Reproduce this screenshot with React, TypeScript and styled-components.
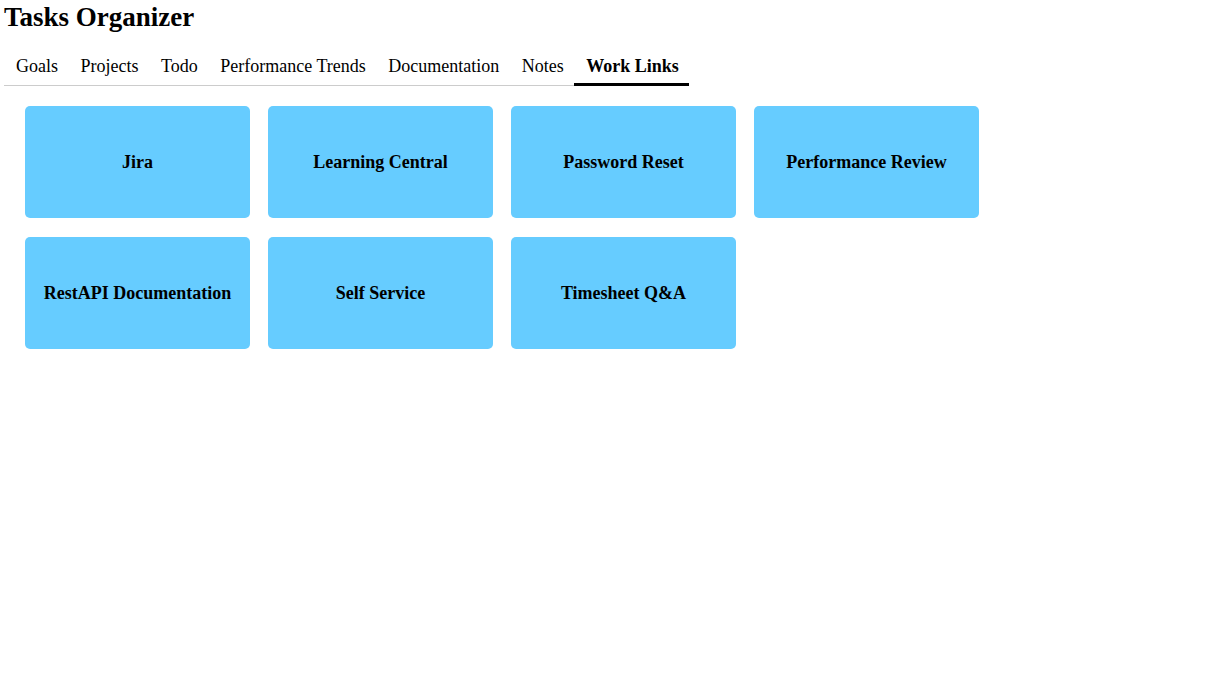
import React from "react";
import styled, { createGlobalStyle } from "styled-components";

const GlobalStyle = createGlobalStyle`
  html, body {
    margin: 0;
    padding: 0;
    background: #ffffff;
    font-family: "Liberation Serif", "Times New Roman", serif;
    color: #000000;
  }
`;

const Page = styled.div`
  padding: 2px 4px 4px;
`;

const Title = styled.h2`
  margin: 0 0 17px;
  font-size: 27px;
  font-weight: bold;
  line-height: normal;
`;

const TabBar = styled.nav`
  display: inline-flex;
  border-bottom: 1px solid #cccccc;
`;

const Tab = styled.button<{ $active?: boolean }>`
  font-family: "Liberation Serif", "Times New Roman", serif;
  font-size: 18px;
  line-height: normal;
  font-weight: ${(p) => (p.$active ? "bold" : "normal")};
  color: #000000;
  background: none;
  border: none;
  border-bottom: 3px solid ${(p) => (p.$active ? "#000000" : "transparent")};
  margin-bottom: -1px;
  padding: 6px 10.5px 6px 12px;
  cursor: pointer;
`;

const CardGrid = styled.div`
  display: flex;
  flex-wrap: wrap;
  gap: 19px 18px;
  padding: 20px 0 0 21px;
  width: 972px;
`;

const LinkCard = styled.a`
  display: flex;
  align-items: center;
  justify-content: center;
  width: 225px;
  height: 112px;
  background: #66ccff;
  border-radius: 5px;
  font-size: 18px;
  font-weight: bold;
  color: #000000;
  text-decoration: none;
  text-align: center;
`;

const tabs = [
  "Goals",
  "Projects",
  "Todo",
  "Performance Trends",
  "Documentation",
  "Notes",
  "Work Links",
];

const links = [
  "Jira",
  "Learning Central",
  "Password Reset",
  "Performance Review",
  "RestAPI Documentation",
  "Self Service",
  "Timesheet Q&A",
];

export default function App() {
  return (
    <Page>
      <GlobalStyle />
      <Title>Tasks Organizer</Title>
      <TabBar>
        {tabs.map((t) => (
          <Tab key={t} $active={t === "Work Links"}>
            {t}
          </Tab>
        ))}
      </TabBar>
      <CardGrid>
        {links.map((l) => (
          <LinkCard key={l} href="#">
            {l}
          </LinkCard>
        ))}
      </CardGrid>
    </Page>
  );
}
